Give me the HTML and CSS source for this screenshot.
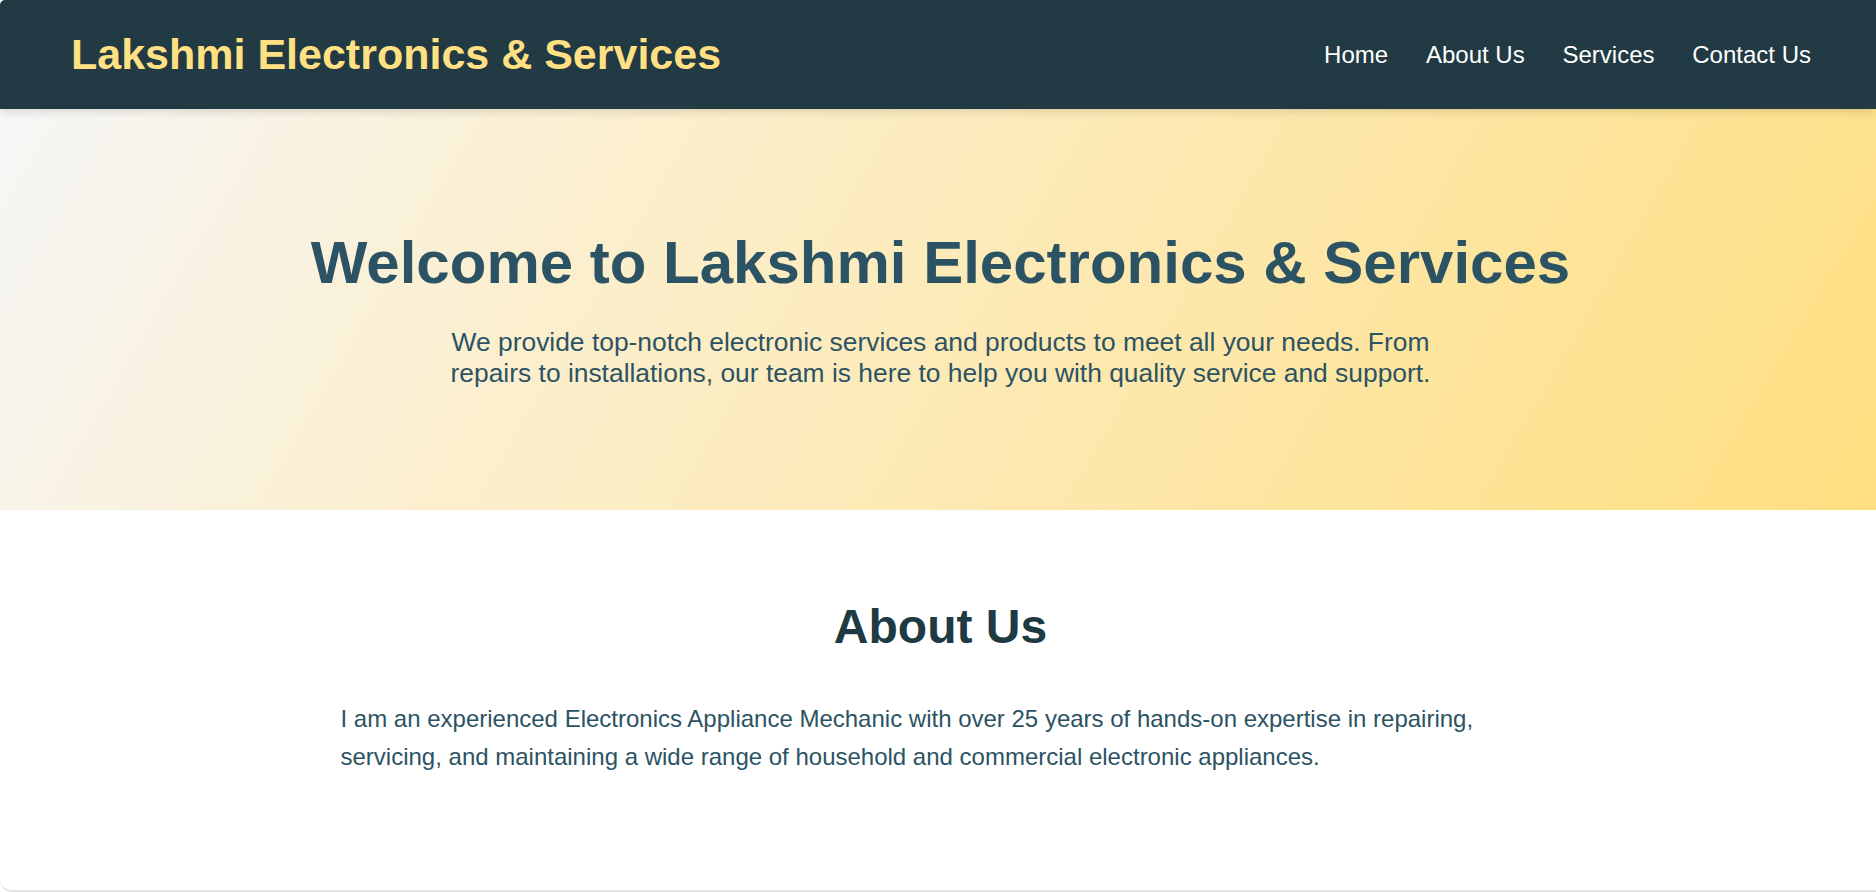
FILE: index.html
```html
<!DOCTYPE html>
<html lang="en">
<head>
<meta charset="utf-8">
<title>Lakshmi Electronics &amp; Services</title>
<link rel="stylesheet" href="styles.css">
</head>
<body>
<div class="page">
  <header class="site-header">
    <h1 class="brand">Lakshmi Electronics &amp; Services</h1>
    <nav class="nav">
      <a href="#home">Home</a>
      <a href="#about">About Us</a>
      <a href="#services">Services</a>
      <a href="#contact">Contact Us</a>
    </nav>
  </header>
  <section class="hero" id="home">
    <h2 class="hero-title">Welcome to Lakshmi Electronics &amp; Services</h2>
    <p class="hero-text">We provide top-notch electronic services and products to meet all your needs. From repairs to installations, our team is here to help you with quality service and support.</p>
  </section>
  <section class="about" id="about">
    <div class="about-inner">
      <h2 class="about-title">About Us</h2>
      <p class="about-text">I am an experienced Electronics Appliance Mechanic with over 25 years of hands-on expertise in repairing, servicing, and maintaining a wide range of household and commercial electronic appliances.</p>
    </div>
  </section>
</div>
</body>
</html>
```

FILE: styles.css
```css
html, body {
  margin: 0;
  padding: 0;
  background: #ffffff;
}
body {
  font-family: "Liberation Sans", Arial, sans-serif;
}
.page {
  box-sizing: border-box;
  height: 892px;
  overflow: hidden;
  border-bottom: 2px solid #e4e4e4;
  border-radius: 5px 0 0 12px;
  background: #ffffff;
}
.site-header {
  position: relative;
  z-index: 2;
  display: flex;
  align-items: center;
  justify-content: space-between;
  background: #213a44;
  padding: 30px 65px 31px 71px;
  box-shadow: 0 3px 8px rgba(0, 0, 0, 0.12);
}
.brand {
  margin: 0;
  font-size: 43px;
  line-height: 48px;
  font-weight: 700;
  color: #ffe082;
}
.nav {
  display: flex;
  gap: 37.8px;
}
.nav a {
  color: #ffffff;
  text-decoration: none;
  font-size: 24px;
  line-height: 27px;
}
.hero {
  height: 401px;
  box-sizing: border-box;
  padding: 120px 0 0 5px;
  text-align: center;
  background: linear-gradient(120deg, #f6f6f6 0%, #fbefcf 30%, #fde7a8 65%, #ffdf80 100%);
}
.hero-title {
  margin: 0 0 31px;
  font-size: 60px;
  line-height: 67px;
  font-weight: 700;
  color: #2c5364;
}
.hero-text {
  margin: 0 auto;
  max-width: 1050px;
  font-size: 26.4px;
  line-height: 30.5px;
  color: #2c5364;
}
.about {
  padding: 90px 0 0 5px;
}
.about-inner {
  max-width: 1200px;
  margin: 0 auto;
}
.about-title {
  margin: 0 0 46px;
  text-align: center;
  font-size: 48px;
  line-height: 54px;
  font-weight: 700;
  color: #203a43;
}
.about-text {
  margin: 0;
  font-size: 24px;
  line-height: 38.4px;
  color: #2c5364;
}
```
